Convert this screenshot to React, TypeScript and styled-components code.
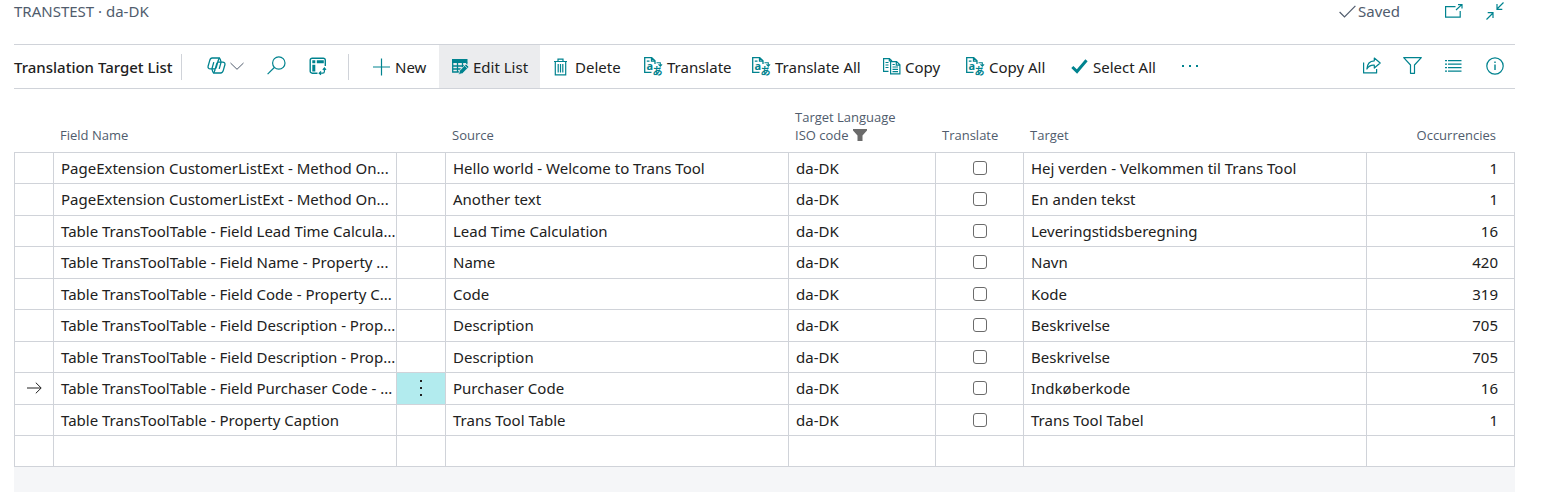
import React from "react";
import styled, { createGlobalStyle } from "styled-components";

const teal = "#00838f";
const line = "#d0d3d9";
const muted = "#505c6d";
const font = '"Noto Sans", "Noto Sans CJK JP", sans-serif';

const GlobalStyle = createGlobalStyle`
  *, *::before, *::after { box-sizing: border-box; }
  body {
    margin: 0;
    background: #fff;
    color: #212121;
    font-family: ${font};
    font-size: 15px;
    line-height: 20px;
  }
`;

const Page = styled.div`
  display: flex;
  flex-direction: column;
  min-height: 100vh;
  padding: 0 31px 0 14px;
`;

const TopBar = styled.header`
  display: flex;
  align-items: flex-start;
  justify-content: space-between;
  height: 44px;
  padding-top: 1px;
  color: ${muted};
`;

const TopGroup = styled.div`
  display: flex;
  align-items: center;
  height: 20px;
`;

const Saved = styled.span`
  display: flex;
  align-items: center;
  gap: 2px;
  margin-right: 33px;
`;

const IconButton = styled.button<{ $width?: number }>`
  display: inline-flex;
  align-items: center;
  justify-content: center;
  gap: 4px;
  flex: none;
  width: ${(p) => p.$width ?? 41}px;
  height: 100%;
  padding: 0;
  border: 0;
  background: none;
  color: ${teal};
`;

const Toolbar = styled.nav`
  display: flex;
  align-items: center;
  height: 45px;
  border-top: 1px solid ${line};
  border-bottom: 1px solid ${line};
`;

const Title = styled.h1`
  flex: none;
  width: 167px;
  margin: 0;
  font-size: 15px;
  font-weight: 500;
  line-height: 20px;
  white-space: nowrap;
`;

const Divider = styled.span`
  flex: none;
  width: 1px;
  height: 26px;
  background: ${line};
`;

const ViewTools = styled.div`
  display: flex;
  height: 100%;
  padding: 0 10px 2px 13px;
`;

const Actions = styled.div`
  display: flex;
  flex: 1;
  height: 100%;
  padding-left: 11px;
`;

const PaneTools = styled.div`
  display: flex;
  height: 100%;
  padding-bottom: 2px;
`;

const ActionButton = styled.button<{ $width: number; $active?: boolean }>`
  display: inline-flex;
  align-items: center;
  flex: none;
  gap: 4px;
  width: ${(p) => p.$width}px;
  height: 100%;
  padding: 0 0 0 13px;
  border: 0;
  background: ${(p) => (p.$active ? "#ebecee" : "none")};
  color: inherit;
  font: inherit;
  white-space: nowrap;
  svg { color: ${teal}; }
`;

const Icon = styled.svg`
  display: block;
  flex: none;
  overflow: visible;
  fill: none;
  stroke: currentColor;
`;

const Grid = styled.table`
  width: 100%;
  margin-top: 16px;
  table-layout: fixed;
  border-collapse: separate;
  border-spacing: 0;
`;

const Col = styled.col<{ $width?: number }>`
  width: ${(p) => (p.$width ? `${p.$width}px` : "auto")};
`;

const HeadCell = styled.th<{ $align?: "right" | "center" }>`
  height: 48px;
  padding: 0 19px 8px 6px;
  border-bottom: 1px solid ${line};
  color: ${muted};
  font-family: "Open Sans", sans-serif;
  font-size: 13px;
  font-weight: 400;
  line-height: 18px;
  text-align: ${(p) => p.$align ?? "left"};
  vertical-align: bottom;
  white-space: nowrap;
  svg { display: inline-block; vertical-align: -1px; margin-left: 4px; }
`;

const CheckHeadCell = styled(HeadCell)`
  padding-right: 0;
`;

const Cell = styled.td<{ $align?: "right" | "center" }>`
  padding: 0 16px 0 7px;
  border-right: 1px solid ${line};
  border-bottom: 1px solid ${line};
  text-align: ${(p) => p.$align ?? "left"};
  white-space: nowrap;
  overflow: hidden;
  &:first-child { border-left: 1px solid ${line}; }
`;

const NameCell = styled(Cell)`
  padding-right: 0;
`;

const ToolCell = styled(Cell)<{ $selected?: boolean }>`
  padding: 0;
  background: ${(p) => (p.$selected ? "#b2ebee" : "none")};
  svg { margin: 0 auto; }
`;

const Row = styled.tr`
  height: 31px;
  &:nth-child(even):not(:last-child) { height: 32px; }
  &:nth-child(even) > td { padding-bottom: 1px; }
`;

const MoreButton = styled.button`
  display: block;
  width: 100%;
  padding: 0;
  border: 0;
  background: none;
  color: #212121;
`;

const Check = styled.input`
  appearance: none;
  display: block;
  width: 14px;
  height: 14px;
  margin: 0 auto;
  border: 1px solid #6b6b6b;
  border-radius: 3px;
  background: #fff;
`;

const Filler = styled.div`
  flex: 1;
  min-height: 25px;
  background: #f5f6f8;
`;

const CopilotIcon = () => (
  <Icon width="19" height="17" viewBox="0 0 19 17" strokeWidth="1.3" strokeLinejoin="round">
    <path d="M5.200 1h6.500c.9 0 1.300.6 1.600 1.500l.8 2.600h1.600c1.700 0 2.600 1.100 2.200 2.700l-1.600 5.600c-.4 1.600-1.300 2.600-2.700 2.600H7.300c-.9 0-1.300-.6-1.600-1.500l-.8-2.600H3.300C1.600 11.900.700 10.800 1.100 9.200l1.600-5.600C3.100 2 3.800 1 5.200 1z" />
    <path d="M14.100 5.100h-2.600c-.9 0-1.400.5-1.700 1.400L8 12.800c-.5 1.700-.8 3.200-2 3.200M4.900 11.900h2.600c.9 0 1.400-.5 1.700-1.400l1.800-6.300C11.500 2.500 11.800 1 13 1M6.800 5.100l-1.900 6.800M12.200 11.900l1.900-6.800" />
  </Icon>
);

const ChevronIcon = () => (
  <Icon width="14" height="8" viewBox="0 0 14 8" strokeWidth="1">
    <path d="M.5 1 7 7.300 13.500 1" stroke="#505c6d" />
  </Icon>
);

const SearchIcon = () => (
  <Icon width="19" height="19" viewBox="0 0 19 19" strokeWidth="1.200">
    <circle cx="11.800" cy="7" r="6.200" />
    <path d="M7.300 11.500.6 18.200" />
  </Icon>
);

const AnalyzeIcon = () => (
  <Icon width="18" height="18" viewBox="0 0 18 18" strokeWidth="1.400">
    <path d="M16.300 9V3.200a2 2 0 0 0-2-2H3.200a2 2 0 0 0-2 2v11a2 2 0 0 0 2 2h5.300" />
    <path d="M3.300 3.300h3v3h-3zM7.800 3.300h7v3h-7zM3.300 7.800h3v6.700h-3z" fill="currentColor" stroke="none" />
    <path d="M11 16.200h2.800a1.600 1.600 0 0 0 1.600-1.600v-2.600M12 14.400l-1.800 1.800 1.800 1.500M13.800 12.800l1.600-1.800 1.600 1.800" strokeWidth="1.200" />
  </Icon>
);

const PlusIcon = () => (
  <Icon width="18" height="18" viewBox="0 0 18 18" strokeWidth="1.200">
    <path d="M8.500.5v17M0 9h17" />
  </Icon>
);

const EditListIcon = () => (
  <Icon width="17" height="16" viewBox="0 0 17 16" strokeWidth="1.300">
    <path d="M0 0h15.500v4H0z" fill="currentColor" stroke="none" />
    <path d="M.7 4v9h6.500M.7 7H12M.7 10h8M5.500 4v9M10.500 4v4.500M14.800 3.500v2" />
    <path d="M6.500 15.600l1.200-4L14 5l2.900 2.900-6.400 6.600z" fill="currentColor" stroke="#ebecee" strokeWidth=".7" />
    <path d="M12.700 6.500l2.700 2.700" stroke="#ebecee" strokeWidth=".8" />
  </Icon>
);

const TrashIcon = () => (
  <Icon width="18" height="18" viewBox="0 0 18 18" strokeWidth="1.200">
    <path d="M1 3.500h13M5 3.500V1.200h5v2.300M2.300 3.500v13.300h10.400V3.500M5.200 6v8.500M7.500 6v8.500M9.800 6v8.500" />
  </Icon>
);

const TranslateIcon = () => (
  <Icon width="19" height="19" viewBox="0 0 19 19" strokeWidth="1.300">
    <path d="M7.500 15.300H.7V.7h7l3.300 3.200V7M7.500.7v3.500H11M2.800 4.200h2.700" />
    <path d="M12.500 5.700h3.800v3M14.500 7.300l1.800 1.800 1.800-1.800" strokeWidth="1.100" />
    <text x="2.500" y="13" fill="currentColor" stroke="none" fontSize="11" fontWeight="700">a</text>
    <text x="8.500" y="18" fill="currentColor" stroke="none" fontSize="10" fontWeight="700" fontFamily="Noto Sans CJK JP">あ</text>
  </Icon>
);

const CopyIcon = () => (
  <Icon width="18" height="17" viewBox="0 0 18 17" strokeWidth="1.200">
    <path d="M5.500 13.400H.6V.6h5.800L9 3M6.300.6V3H9M2.500 4.500h3M2.500 7h3M2.500 9.500h3" />
    <path d="M7.600 3.600h6l3.300 3.200v9.100H7.600zM13.300 3.600v3.500h3.600M9.500 6.500h2.300M9.500 9h5.500M9.500 11.300h5.500M9.500 13.600h5.500" />
  </Icon>
);

const TickIcon = () => (
  <Icon width="18" height="15" viewBox="0 0 18 15" strokeWidth="3">
    <path d="M1.300 8 6 12.500 15.500 1.300" />
  </Icon>
);

const DotsIcon = () => (
  <Icon width="18" height="6" viewBox="0 0 18 6">
    <path d="M1 1h2v2H1zM8 1h2v2H8zM15 1h2v2h-2z" fill="currentColor" stroke="none" />
  </Icon>
);

const SavedIcon = () => (
  <Icon width="17" height="13" viewBox="0 0 17 13" strokeWidth="1.200">
    <path d="M.6 7 5.500 12 16.400.8" />
  </Icon>
);

const PopOutIcon = () => (
  <Icon width="18" height="14" viewBox="0 0 18 14" strokeWidth="1.200">
    <path d="M10.500 2.600H.6v10.500h14.600V7M11 6l5.800-5.400M13 .6h4v4" />
  </Icon>
);

const CollapseIcon = () => (
  <Icon width="18" height="18" viewBox="0 0 18 18" strokeWidth="1.200">
    <path d="M17.500.5 11 7M11 2v5.300h5.300M.5 17.500 7 11M1.700 10.700H7V16" />
  </Icon>
);

const ShareIcon = () => (
  <Icon width="18" height="17" viewBox="0 0 18 17" strokeWidth="1.200" strokeLinejoin="round">
    <path d="M.6 5.500v10.400h13V12" />
    <path d="M11.300 1 17.200 6l-5.900 5V8.200C8 8 5.500 9 3.900 12 4.200 7 7 4 11.300 3.800z" />
  </Icon>
);

const FunnelIcon = () => (
  <Icon width="19" height="17" viewBox="0 0 19 17" strokeWidth="1.200" strokeLinejoin="round">
    <path d="M.7.700h17.600L11.500 8v8.300h-4V8z" />
  </Icon>
);

const ListIcon = () => (
  <Icon width="17" height="12" viewBox="0 0 17 12" strokeWidth="1.300">
    <path d="M0 .7h2M0 4.200h2M0 7.700h2M0 11.200h2M3 .7h13.500M3 4.200h13.500M3 7.700h13.500M3 11.200h13.500" />
  </Icon>
);

const InfoIcon = () => (
  <Icon width="18" height="18" viewBox="0 0 18 18" strokeWidth="1.200">
    <circle cx="9" cy="9" r="8.200" />
    <path d="M9 7.500V13M9 4.500V6" strokeWidth="1.400" />
  </Icon>
);

const FilledFunnelIcon = () => (
  <Icon width="14" height="12" viewBox="0 0 14 12">
    <path d="M0 0h14v1.500L9.500 6.500V12h-5V6.500L0 1.500z" fill="#6b6b6b" stroke="none" />
  </Icon>
);

const ArrowIcon = () => (
  <Icon width="15" height="12" viewBox="0 0 15 12" strokeWidth="1">
    <path d="M0 6h14M8.800.7 14.200 6l-5.400 5.300" />
  </Icon>
);

const VerticalDotsIcon = () => (
  <Icon width="4" height="18" viewBox="0 0 4 18">
    <path d="M1 1h2v2H1zM1 8h2v2H1zM1 15h2v2H1z" fill="currentColor" stroke="none" />
  </Icon>
);

const actions = [
  { label: "New", icon: <PlusIcon />, width: 79 },
  { label: "Edit List", icon: <EditListIcon />, width: 101, active: true },
  { label: "Delete", icon: <TrashIcon />, width: 91 },
  { label: "Translate", icon: <TranslateIcon />, width: 108 },
  { label: "Translate All", icon: <TranslateIcon />, width: 131 },
  { label: "Copy", icon: <CopyIcon />, width: 83 },
  { label: "Copy All", icon: <TranslateIcon />, width: 105 },
  { label: "Select All", icon: <TickIcon />, width: 110 },
];

interface Entry {
  field: string;
  source: string;
  target: string;
  count: number;
  selected?: boolean;
}

const entries: Entry[] = [
  { field: "PageExtension CustomerListExt - Method On...", source: "Hello world - Welcome to Trans Tool", target: "Hej verden - Velkommen til Trans Tool", count: 1 },
  { field: "PageExtension CustomerListExt - Method On...", source: "Another text", target: "En anden tekst", count: 1 },
  { field: "Table TransToolTable - Field Lead Time Calcula...", source: "Lead Time Calculation", target: "Leveringstidsberegning", count: 16 },
  { field: "Table TransToolTable - Field Name - Property ...", source: "Name", target: "Navn", count: 420 },
  { field: "Table TransToolTable - Field Code - Property C...", source: "Code", target: "Kode", count: 319 },
  { field: "Table TransToolTable - Field Description - Prop...", source: "Description", target: "Beskrivelse", count: 705 },
  { field: "Table TransToolTable - Field Description - Prop...", source: "Description", target: "Beskrivelse", count: 705 },
  { field: "Table TransToolTable - Field Purchaser Code - ...", source: "Purchaser Code", target: "Indkøberkode", count: 16, selected: true },
  { field: "Table TransToolTable - Property Caption", source: "Trans Tool Table", target: "Trans Tool Tabel", count: 1 },
];

export default function App() {
  return (
    <Page>
      <GlobalStyle />
      <TopBar>
        <TopGroup>TRANSTEST · da-DK</TopGroup>
        <TopGroup>
          <Saved><SavedIcon />Saved</Saved>
          <IconButton aria-label="Open in new window"><PopOutIcon /></IconButton>
          <IconButton aria-label="Collapse"><CollapseIcon /></IconButton>
        </TopGroup>
      </TopBar>
      <Toolbar>
        <Title>Translation Target List</Title>
        <Divider />
        <ViewTools>
          <IconButton $width={61} aria-label="Copilot"><CopilotIcon /><ChevronIcon /></IconButton>
          <IconButton aria-label="Search"><SearchIcon /></IconButton>
          <IconButton aria-label="Analyze"><AnalyzeIcon /></IconButton>
        </ViewTools>
        <Divider />
        <Actions>
          {actions.map((a) => (
            <ActionButton key={a.label} $width={a.width} $active={a.active}>
              {a.icon}
              {a.label}
            </ActionButton>
          ))}
          <IconButton $width={44} aria-label="More options"><DotsIcon /></IconButton>
        </Actions>
        <PaneTools>
          <IconButton aria-label="Share"><ShareIcon /></IconButton>
          <IconButton aria-label="Filter"><FunnelIcon /></IconButton>
          <IconButton aria-label="View"><ListIcon /></IconButton>
          <IconButton aria-label="Details"><InfoIcon /></IconButton>
        </PaneTools>
      </Toolbar>
      <Grid>
        <colgroup>
          <Col $width={40} />
          <Col />
          <Col $width={49} />
          <Col />
          <Col $width={147} />
          <Col $width={88} />
          <Col />
          <Col $width={148} />
        </colgroup>
        <thead>
          <tr>
            <HeadCell />
            <HeadCell>Field Name</HeadCell>
            <HeadCell />
            <HeadCell>Source</HeadCell>
            <HeadCell>Target Language<br />ISO code<FilledFunnelIcon /></HeadCell>
            <CheckHeadCell>Translate</CheckHeadCell>
            <HeadCell>Target</HeadCell>
            <HeadCell $align="right">Occurrencies</HeadCell>
          </tr>
        </thead>
        <tbody>
          {entries.map((e, i) => (
            <Row key={i}>
              <ToolCell>{e.selected && <ArrowIcon />}</ToolCell>
              <NameCell>{e.field}</NameCell>
              <ToolCell $selected={e.selected}>
                {e.selected && <MoreButton aria-label="Row actions"><VerticalDotsIcon /></MoreButton>}
              </ToolCell>
              <Cell>{e.source}</Cell>
              <Cell>da-DK</Cell>
              <ToolCell><Check type="checkbox" aria-label={`Translate ${e.source}`} /></ToolCell>
              <Cell>{e.target}</Cell>
              <Cell $align="right">{e.count}</Cell>
            </Row>
          ))}
          <Row>
            <ToolCell /><Cell /><ToolCell /><Cell /><Cell /><ToolCell /><Cell /><Cell />
          </Row>
        </tbody>
      </Grid>
      <Filler />
    </Page>
  );
}
